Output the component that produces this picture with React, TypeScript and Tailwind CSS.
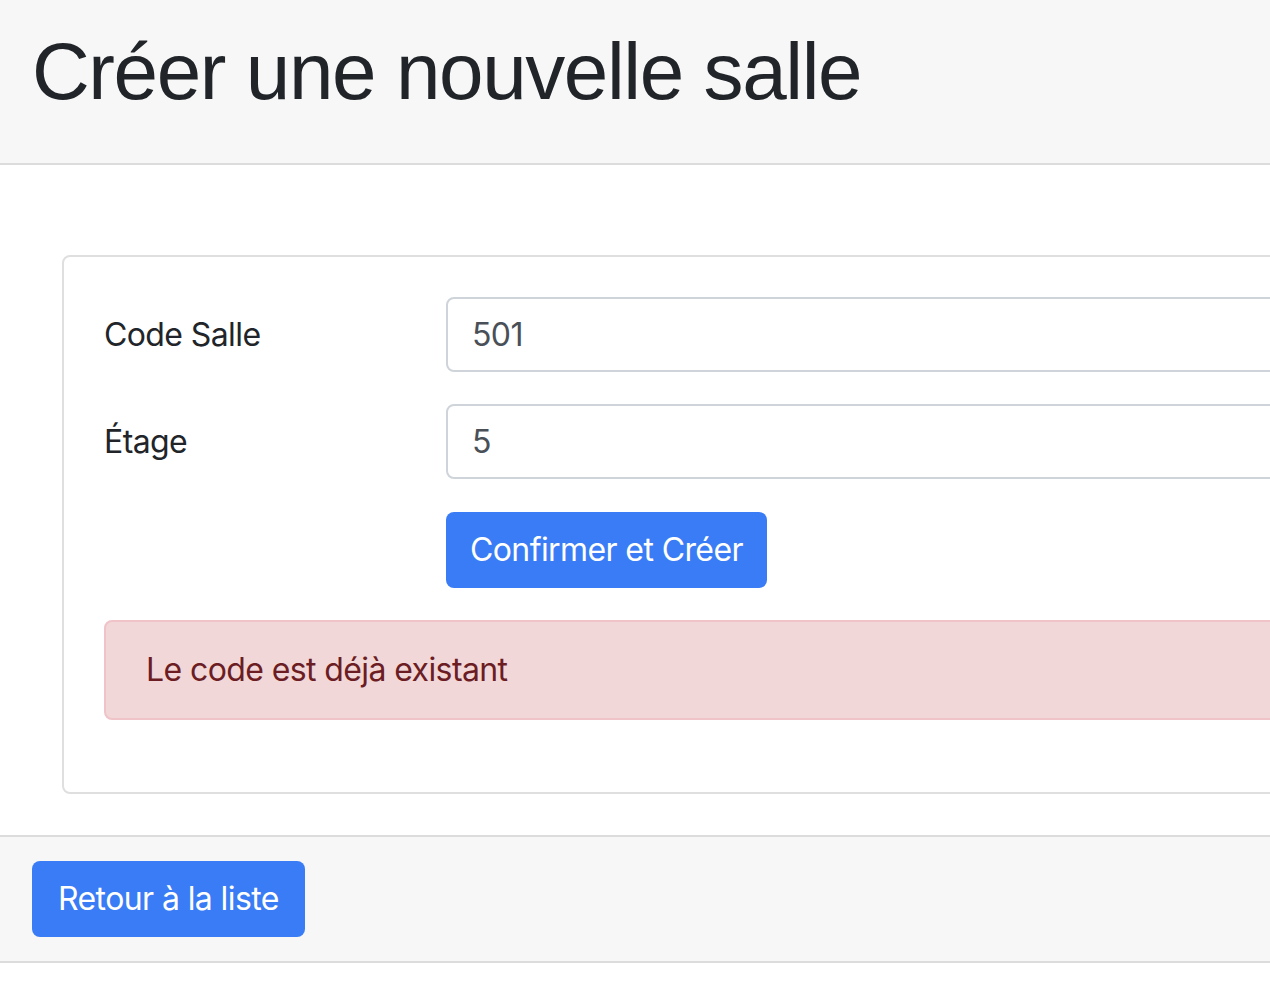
import React from "react";

const fields = [
  { label: "Code Salle", value: "501" },
  { label: "Étage", value: "5" },
];

export default function App() {
  return (
    <div className="min-h-screen w-full overflow-hidden bg-white font-['Inter','Liberation_Sans',sans-serif] tracking-[-0.6px] text-[#212529]">
      {/* en-tête */}
      <div className="h-[165px] border-b-2 border-[#dcdcdc] bg-[#f7f7f7] px-8 pt-6">
        <h1 className="whitespace-nowrap font-['Liberation_Sans',Arial,sans-serif] text-[80px] leading-[96px] tracking-[-1.4px] text-[#212529]">
          Créer une nouvelle salle
        </h1>
      </div>

      {/* corps */}
      <div className="pl-[62px] pt-[90px] pb-[41px]">
        <div className="w-[1400px] rounded-lg border-2 border-[#dfdfdf] p-10">
          {fields.map((f) => (
            <div key={f.label} className="mb-8 flex items-center">
              <label className="w-[342px] shrink-0 text-[32px] leading-[48px]">{f.label}</label>
              <input
                readOnly
                value={f.value}
                className="h-[75px] flex-1 rounded-lg border-2 border-[#ced4da] bg-white px-6 text-[32px] tracking-[-0.6px] text-[#495057] outline-none"
              />
            </div>
          ))}
          <div className="mb-8 flex pt-px">
            <div className="w-[342px] shrink-0" />
            <button className="h-[76px] rounded-lg bg-[#397cf5] px-6 text-[32px] tracking-[-0.6px] text-white">
              Confirmer et Créer
            </button>
          </div>
          <div className="mb-8 rounded-lg border-2 border-[#efc3c7] bg-[#f2d7d9] px-10 py-6 text-[32px] leading-[48px] text-[#6b1d23]">
            Le code est déjà existant
          </div>
        </div>
      </div>

      {/* pied */}
      <div className="border-y-2 border-[#dcdcdc] bg-[#f7f7f7] px-8 py-6">
        <button className="h-[76px] rounded-lg bg-[#397cf5] px-[26px] text-[32px] tracking-[-0.6px] text-white">
          Retour à la liste
        </button>
      </div>
    </div>
  );
}
